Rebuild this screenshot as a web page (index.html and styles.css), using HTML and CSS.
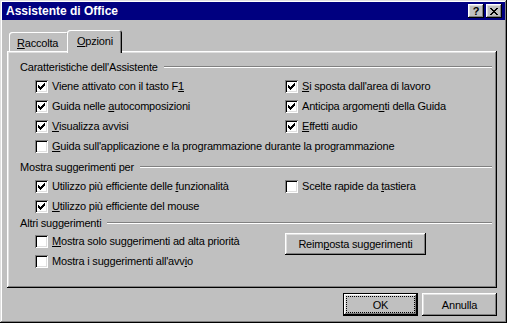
FILE: index.html
```html
<!DOCTYPE html>
<html lang="it">
<head>
  <meta charset="UTF-8" />
  <title>Assistente di Office</title>
  <link rel="stylesheet" href="styles.css">
</head>
<body>
  <div class="window">
    <div class="titlebar">
      <span class="title">Assistente di Office</span>
      <span class="tb-btn help">?</span>
      <span class="tb-btn close">
        <svg width="8" height="7" viewBox="0 0 8 7"><path d="M0 0h2v1h1v1h2v-1h1v-1h2v1h-1v1h-1v1h-1v1h1v1h1v1h1v1h-2v-1h-1v-1h-2v1h-1v1h-2v-1h1v-1h1v-1h1v-1h-1v-1h-1v-1h-1z" fill="#000"/></svg>
      </span>
    </div>

    <div class="tabs">
      <div class="tab"><span><u>R</u>accolta</span></div>
      <div class="tab active"><span><u>O</u>pzioni</span></div>
    </div>

    <div class="panel">
      <div class="group-head first"><span>Caratteristiche dell'Assistente</span><i class="rule"></i></div>
      <div class="rows">
        <label class="check"><span class="box on"><svg width="7" height="7" viewBox="0 0 7 7"><path d="M0 2h1v1h1v1h1v-1h1v-1h1v-1h1v-1h1v3h-1v1h-1v1h-1v1h-1v1h-1v-1h-1v-1h-1v-1h-1z"/></svg></span><span>Viene attivato con il tasto F<u>1</u></span></label>
        <label class="check"><span class="box on"><svg width="7" height="7" viewBox="0 0 7 7"><path d="M0 2h1v1h1v1h1v-1h1v-1h1v-1h1v-1h1v3h-1v1h-1v1h-1v1h-1v1h-1v-1h-1v-1h-1v-1h-1z"/></svg></span><span><u>S</u>i sposta dall'area di lavoro</span></label>
        <label class="check"><span class="box on"><svg width="7" height="7" viewBox="0 0 7 7"><path d="M0 2h1v1h1v1h1v-1h1v-1h1v-1h1v-1h1v3h-1v1h-1v1h-1v1h-1v1h-1v-1h-1v-1h-1v-1h-1z"/></svg></span><span>Guida nelle <u>a</u>utocomposizioni</span></label>
        <label class="check"><span class="box on"><svg width="7" height="7" viewBox="0 0 7 7"><path d="M0 2h1v1h1v1h1v-1h1v-1h1v-1h1v-1h1v3h-1v1h-1v1h-1v1h-1v1h-1v-1h-1v-1h-1v-1h-1z"/></svg></span><span>Anticipa argome<u>n</u>ti della Guida</span></label>
        <label class="check"><span class="box on"><svg width="7" height="7" viewBox="0 0 7 7"><path d="M0 2h1v1h1v1h1v-1h1v-1h1v-1h1v-1h1v3h-1v1h-1v1h-1v1h-1v1h-1v-1h-1v-1h-1v-1h-1z"/></svg></span><span><u>V</u>isualizza avvisi</span></label>
        <label class="check"><span class="box on"><svg width="7" height="7" viewBox="0 0 7 7"><path d="M0 2h1v1h1v1h1v-1h1v-1h1v-1h1v-1h1v3h-1v1h-1v1h-1v1h-1v1h-1v-1h-1v-1h-1v-1h-1z"/></svg></span><span><u>E</u>ffetti audio</span></label>
        <label class="check wide"><span class="box"></span><span><u>G</u>uida sull'applicazione e la programmazione durante la programmazione</span></label>
      </div>

      <div class="group-head second"><span>Mostra suggerimenti per</span><i class="rule"></i></div>
      <div class="rows">
        <label class="check"><span class="box on"><svg width="7" height="7" viewBox="0 0 7 7"><path d="M0 2h1v1h1v1h1v-1h1v-1h1v-1h1v-1h1v3h-1v1h-1v1h-1v1h-1v1h-1v-1h-1v-1h-1v-1h-1z"/></svg></span><span>Utilizzo più efficiente delle <u>f</u>unzionalità</span></label>
        <label class="check"><span class="box"></span><span>Scelte rapide da <u>t</u>astiera</span></label>
        <label class="check"><span class="box on"><svg width="7" height="7" viewBox="0 0 7 7"><path d="M0 2h1v1h1v1h1v-1h1v-1h1v-1h1v-1h1v3h-1v1h-1v1h-1v1h-1v1h-1v-1h-1v-1h-1v-1h-1z"/></svg></span><span><u>U</u>tilizzo più efficiente del mouse</span></label>
      </div>

      <div class="group-head third"><span>Altri suggerimenti</span><i class="rule"></i></div>
      <div class="rows">
        <label class="check"><span class="box"></span><span><u>M</u>ostra solo suggerimenti ad alta priorità</span></label>
        <button class="btn reset">Reim<u>p</u>osta suggerimenti</button>
        <label class="check"><span class="box"></span><span>Mostra i suggerimenti all'avv<u>i</u>o</span></label>
      </div>
    </div>

    <div class="footer">
      <button class="btn default"><span class="focus">OK</span></button>
      <button class="btn">Annulla</button>
    </div>
  </div>
</body>
</html>
```

FILE: styles.css
```css
body {
  margin: 0;
  background: #c0c0c0;
  font-family: "Liberation Sans", Arial, sans-serif;
  font-size: 11px;
  letter-spacing: -0.2px;
  color: #000;
}
u {
  text-decoration: underline;
  text-underline-offset: 1px;
}

.window {
  width: 507px;
  height: 323px;
  box-sizing: border-box;
  padding: 2px;
  background: #c0c0c0;
  box-shadow: inset -1px -1px #000, inset 1px 1px #dfdfdf, inset -2px -2px #808080, inset 2px 2px #fff;
}

.titlebar {
  height: 18px;
  background: #000080;
  color: #fff;
  display: flex;
  align-items: center;
  padding: 0 3px 0 4px;
  gap: 2px;
}
.title {
  flex: 1;
  font-weight: bold;
  font-size: 12px;
  letter-spacing: 0;
}
.tb-btn {
  width: 16px;
  height: 14px;
  box-sizing: border-box;
  background: #c0c0c0;
  color: #000;
  display: flex;
  align-items: center;
  justify-content: center;
  font-weight: bold;
  font-size: 11px;
  line-height: 1;
  box-shadow: inset -1px -1px #000, inset 1px 1px #fff, inset -2px -2px #808080, inset 2px 2px #dfdfdf;
}
.tb-btn svg {
  display: block;
  margin-top: 1px;
}

.tabs {
  display: flex;
  align-items: flex-end;
  height: 21px;
  margin: 10px 0 0 7px;
}
.tab {
  height: 19px;
  box-sizing: border-box;
  padding: 2px 8px 0;
  display: flex;
  align-items: center;
  border-radius: 3px 3px 0 0;
  box-shadow: inset 1px 1px #fff, inset -1px 0 #000, inset -2px 0 #808080;
}
.tab:first-child {
  width: 60px;
}
.tab.active {
  position: relative;
  z-index: 1;
  width: 55px;
  height: 23px;
  margin: 0 -2px -2px -2px;
  padding: 0 10px 2px;
  background: #c0c0c0;
}

.panel {
  height: 237px;
  box-sizing: border-box;
  margin: 0 8px 0 5px;
  padding: 2px 5px 0 13px;
  box-shadow: inset -1px -1px #000, inset 1px 1px #fff, inset -2px -2px #808080, inset 2px 2px #dfdfdf;
}

.group-head {
  height: 14px;
  display: flex;
  align-items: center;
  margin: 4px 0 2px;
}
.group-head.first { margin-top: 7px; }
.group-head.third { margin: 0 0 1px; }
.rule {
  flex: 1;
  margin-left: 6px;
  border-top: 1px solid #808080;
  border-bottom: 1px solid #fff;
  box-sizing: border-box;
  height: 2px;
}

.rows {
  display: grid;
  grid-template-columns: 250px 1fr;
  grid-auto-rows: 20px;
  margin-left: 15px;
}
.check {
  display: flex;
  align-items: center;
  gap: 4px;
  white-space: nowrap;
}
.check.wide {
  grid-column: 1 / span 2;
}

.box {
  width: 13px;
  height: 13px;
  flex: none;
  box-sizing: border-box;
  padding: 3px;
  background: #fff;
  box-shadow: inset 1px 1px #808080, inset -1px -1px #fff, inset 2px 2px #000, inset -2px -2px #dfdfdf;
}
.box svg {
  display: block;
  fill: #000;
}

.btn {
  font: inherit;
  letter-spacing: inherit;
  color: #000;
  background: #c0c0c0;
  border: none;
  height: 23px;
  width: 75px;
  padding: 0;
  box-shadow: inset -1px -1px #000, inset 1px 1px #fff, inset -2px -2px #808080, inset 2px 2px #dfdfdf;
}
.btn.reset {
  width: 141px;
  height: 22px;
  margin-top: 2px;
  grid-row: span 2;
  align-self: start;
}
.btn.default {
  box-shadow: inset 0 0 0 1px #000, inset -2px -2px #000, inset 2px 2px #fff, inset -3px -3px #808080, inset 3px 3px #dfdfdf;
  display: flex;
  padding: 4px;
}
.focus {
  flex: 1;
  display: flex;
  align-items: center;
  justify-content: center;
  outline: 1px dotted #000;
}

.footer {
  display: flex;
  justify-content: flex-end;
  gap: 4px;
  margin-top: 5px;
  padding-right: 8px;
}
```
